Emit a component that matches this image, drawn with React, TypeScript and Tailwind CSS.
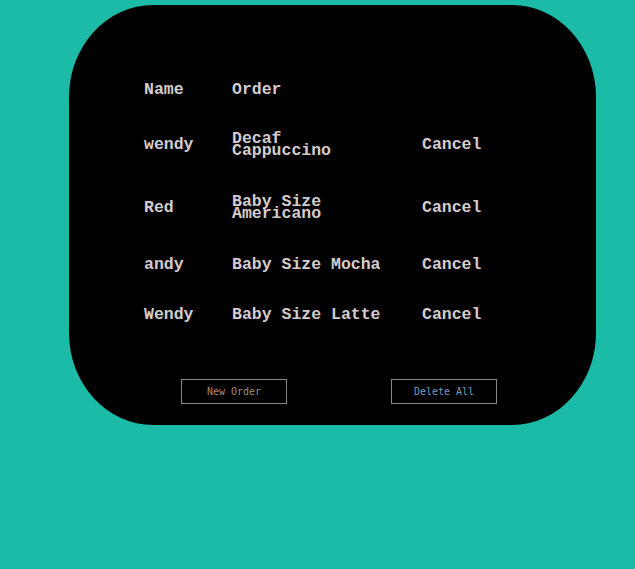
import React from 'react';

interface OrderRow {
  name: string;
  order: string;
}

const orders: OrderRow[] = [
  { name: 'wendy', order: 'Decaf Cappuccino' },
  { name: 'Red', order: 'Baby Size Americano' },
  { name: 'andy', order: 'Baby Size Mocha' },
  { name: 'Wendy', order: 'Baby Size Latte' },
];

const App: React.FC = () => {
  return (
    <div className="min-h-[569px] w-full bg-[#1cbba8] pt-[5px] pl-[69px]">
      <div className="w-[527px] h-[420px] bg-black rounded-[84px/92px] pt-[61px] pl-[75px] font-['Liberation_Mono',monospace] font-bold text-[16.5px] text-[#d4cccc]">
        <table className="border-collapse">
          <thead>
            <tr>
              <th className="w-[88px] text-left align-middle py-[17.5px] leading-[12.5px]">Name</th>
              <th className="w-[190px] text-left align-middle py-[17.5px] leading-[12.5px]">Order</th>
              <th className="text-left align-middle py-[17.5px] leading-[12.5px]"></th>
            </tr>
          </thead>
          <tbody>
            {orders.map((row, i) => (
              <tr key={i}>
                <td className="align-middle py-[19px] leading-[12.5px]">{row.name}</td>
                <td className="align-middle py-[19px] leading-[12.5px]">
                  <div className="max-w-[154px]">{row.order}</div>
                </td>
                <td className="align-middle py-[19px] leading-[12.5px]">Cancel</td>
              </tr>
            ))}
          </tbody>
        </table>

        {/* Actions */}
        <div className="flex mt-[38px] ml-[37px] gap-[104px] font-['DejaVu_Sans_Mono',monospace] font-normal text-[10px]">
          <button className="w-[106px] h-[25px] border border-[#888888] text-[#a48c74]">New Order</button>
          <button className="w-[106px] h-[25px] border border-[#888888] text-[#7c98b8]">Delete All</button>
        </div>
      </div>
    </div>
  );
};

export default App;
